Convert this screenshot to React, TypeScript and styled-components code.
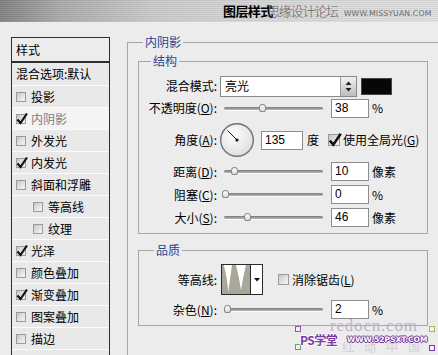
import React from "react";
import styled, { createGlobalStyle } from "styled-components";

const GlobalStyle = createGlobalStyle`
  html, body { margin: 0; padding: 0; }
  body {
    background: #ececec;
    font-family: "Noto Sans CJK SC", "Liberation Sans", sans-serif;
    font-size: 12px;
    color: #000;
  }
`;

const Window = styled.div`
  width: 438px;
  height: 355px;
  overflow: hidden;
  position: relative;
  background: #ececec;
`;

const TitleBar = styled.div`
  height: 22px;
  display: flex;
  align-items: center;
  position: relative;
  padding-left: 223px;
  box-sizing: border-box;
  background:
    repeating-linear-gradient(0deg, rgba(255,255,255,0.10) 0 1px, rgba(0,0,0,0.05) 1px 2px),
    linear-gradient(100deg, #7e7e7e 0%, #a9a9a9 14%, #c9c9c9 35%, #d6d6d6 60%, #dfdfdf 100%);
`;

const Title = styled.div`
  font-size: 13px;
  font-weight: 700;
  line-height: 16px;
  letter-spacing: -0.6px;
`;

const TitleMark = styled.div`
  position: absolute;
  left: 267px;
  top: 3px;
  display: flex;
  align-items: baseline;
  gap: 6px;
  white-space: nowrap;
  color: #5e5e5e;
`;

const TitleMarkCn = styled.span`
  font-size: 13px;
  line-height: 16px;
  letter-spacing: -1.2px;
  font-weight: 300;
`;

const TitleMarkEn = styled.span`
  font-family: "DejaVu Sans", sans-serif;
  font-size: 7.8px;
  letter-spacing: 0.1px;
  color: #6a6a6a;
`;

const Main = styled.div`
  display: flex;
  align-items: flex-start;
  padding-left: 11px;
`;

const StyleList = styled.div`
  width: 99px;
  box-sizing: border-box;
  margin-top: 15px;
  border: 1px solid #2e2e2e;
  padding-bottom: 40px;
  background: #e9e9e9;
  flex-shrink: 0;
`;

const ListHeader = styled.div`
  height: 23px;
  line-height: 23px;
  padding-left: 4px;
  border-bottom: 2px solid #2e2e2e;
  background: #ececec;
`;

const ListRow = styled.div<{ $indent?: boolean; $active?: boolean; $h?: number }>`
  height: ${(p) => p.$h ?? 22}px;
  box-sizing: border-box;
  display: flex;
  align-items: center;
  gap: 5px;
  padding-left: ${(p) => (p.$indent ? 21 : 4)}px;
  border-bottom: 1px solid #fbfbfb;
  background: ${(p) => (p.$active ? "#f4f4f4" : "#e9e9e9")};
  color: ${(p) => (p.$active ? "#7c7c7c" : "#000")};
  line-height: 14px;
`;

const Box = styled.span<{ $size?: number }>`
  position: relative;
  width: ${(p) => p.$size ?? 10}px;
  height: ${(p) => p.$size ?? 10}px;
  box-sizing: border-box;
  border: 1px solid #9a9a9a;
  background: linear-gradient(135deg, #c4c4c4 0%, #dedede 45%, #f6f6f6 100%);
  flex-shrink: 0;
  display: inline-block;
`;

const CheckSvg = styled.svg`
  position: absolute;
  left: -1px;
  top: -3px;
  overflow: visible;
`;

function Check({ checked, size }: { checked?: boolean; size?: number }) {
  const s = size ?? 10;
  return (
    <Box $size={s}>
      {checked && (
        <CheckSvg width={s + 2} height={s + 3} viewBox="0 0 12 13">
          <path d="M1.5 7.5 L4.5 11 L11 1.5" fill="none" stroke="#111" strokeWidth="2.2" />
        </CheckSvg>
      )}
    </Box>
  );
}

const OuterFrame = styled.div`
  position: relative;
  margin-left: 17px;
  margin-top: 20px;
  width: 320px;
  flex-shrink: 0;
  box-sizing: border-box;
  border: 1px solid #a6a6a6;
  padding: 18px 0 40px 10px;
`;

const Frame = styled.div<{ $mt?: number }>`
  position: relative;
  width: 290px;
  box-sizing: border-box;
  border: 1px solid #a6a6a6;
  margin-top: ${(p) => p.$mt ?? 0}px;
  padding-bottom: 6px;
`;

const FrameTitle = styled.div<{ $left: number }>`
  position: absolute;
  top: -8px;
  left: ${(p) => p.$left}px;
  padding: 0 2px;
  line-height: 14px;
  background: #ececec;
  color: #1f4690;
  font-size: 12px;
`;

const Row = styled.div<{ $h: number; $mt: number }>`
  display: flex;
  align-items: center;
  height: ${(p) => p.$h}px;
  margin-top: ${(p) => p.$mt}px;
  line-height: 14px;
`;

const Label = styled.div`
  width: 78px;
  flex-shrink: 0;
  text-align: right;
  white-space: nowrap;
`;

const U = styled.span`
  text-decoration: underline;
`;

const Select = styled.div`
  margin-left: 3px;
  width: 137px;
  height: 21px;
  box-sizing: border-box;
  border: 1px solid #8a8a8a;
  background: #fff;
  display: flex;
  align-items: center;
  padding-left: 4px;
`;

const SelectText = styled.span`
  flex: 1;
`;

const SelectButton = styled.div`
  width: 16px;
  height: 19px;
  box-sizing: border-box;
  border-left: 1px solid #9a9a9a;
  background: linear-gradient(#f2f2f2, #bdbdbd);
  display: flex;
  align-items: center;
  justify-content: center;
`;

const Swatch = styled.div`
  margin-left: 4px;
  width: 31px;
  height: 17px;
  box-sizing: border-box;
  border: 1px solid #444;
  background: #070707;
`;

const Track = styled.div<{ $ml?: number }>`
  position: relative;
  margin-left: ${(p) => p.$ml ?? 7}px;
  width: 99px;
  height: 3px;
  border-radius: 2px;
  background: linear-gradient(#7a7a7a, #b9b9b9);
  box-shadow: 0 1px 0 #fafafa;
  flex-shrink: 0;
`;

const Thumb = styled.div`
  position: absolute;
  top: -3px;
  width: 7px;
  height: 8px;
  box-sizing: border-box;
  margin-left: -3px;
  border: 1px solid #8a8a8a;
  border-radius: 50% 50% 35% 35%;
  background: linear-gradient(#ffffff, #dcdcdc);
`;

function Slider({ pos }: { pos: number }) {
  return (
    <Track>
      <Thumb style={{ left: pos }} />
    </Track>
  );
}

const NumBox = styled.div<{ $w?: number; $ml?: number }>`
  margin-left: ${(p) => p.$ml ?? 8}px;
  width: ${(p) => p.$w ?? 38}px;
  height: 19px;
  box-sizing: border-box;
  border: 1px solid #8e8e8e;
  background: #fff;
  padding-left: 3px;
  line-height: 17px;
  font-family: "Liberation Sans", sans-serif;
  font-size: 12px;
  flex-shrink: 0;
`;

const Unit = styled.span<{ $ml?: number }>`
  margin-left: ${(p) => p.$ml ?? 3}px;
  white-space: nowrap;
`;

const Dial = styled.svg`
  margin-left: 2px;
  flex-shrink: 0;
`;

const CheckLabel = styled.div<{ $ml: number }>`
  margin-left: ${(p) => p.$ml}px;
  display: flex;
  align-items: center;
  gap: 3px;
  white-space: nowrap;
`;

const ContourPicker = styled.div`
  margin-left: 4px;
  width: 42px;
  height: 31px;
  box-sizing: border-box;
  border: 1px solid #2a2a2a;
  display: flex;
  background: #fff;
`;

const ContourArrow = styled.div`
  flex: 1;
  border-left: 1px solid #2a2a2a;
  display: flex;
  align-items: center;
  justify-content: center;
`;

const MarkLayer = styled.div`
  position: absolute;
  left: 290px;
  top: 318px;
  width: 148px;
  height: 37px;
  pointer-events: none;
  white-space: nowrap;
`;

const Redocn = styled.div`
  position: absolute;
  left: 40px;
  top: -1px;
  font-family: "Liberation Serif", serif;
  font-size: 17px;
  line-height: 18px;
  color: #bdb3c6;
  letter-spacing: 0.8px;
`;

const RedocnCn = styled.div`
  position: absolute;
  left: 52px;
  top: 22px;
  font-size: 12px;
  line-height: 14px;
  color: #d3ccd9;
  letter-spacing: 10px;
`;

const PsMark = styled.div`
  position: absolute;
  left: 10px;
  top: 14px;
  font-size: 12px;
  line-height: 16px;
  font-weight: 700;
  color: #7a3aa6;
  text-shadow: 1px 0 #fff, -1px 0 #fff, 0 1px #fff, 0 -1px #fff;
  letter-spacing: -0.5px;
`;

const SiteMark = styled.div`
  position: absolute;
  left: 57px;
  top: 17px;
  font-family: "DejaVu Sans", sans-serif;
  font-size: 7.5px;
  line-height: 10px;
  font-weight: 700;
  color: #fff;
  letter-spacing: 0px;
  text-shadow: 1px 0 #6a2e96, -1px 0 #6a2e96, 0 1px #6a2e96, 0 -1px #6a2e96;
`;

const Corner = styled.div<{ $l: number; $t: number; $c: string }>`
  position: absolute;
  left: ${(p) => p.$l}px;
  top: ${(p) => p.$t}px;
  width: 4px;
  height: 4px;
  border: 1px solid ${(p) => p.$c};
  background: #f2f2f2;
`;

const listItems: { t: string; c?: boolean; indent?: boolean; active?: boolean }[] = [
  { t: "投影" },
  { t: "内阴影", c: true, active: true },
  { t: "外发光" },
  { t: "内发光", c: true },
  { t: "斜面和浮雕" },
  { t: "等高线", indent: true },
  { t: "纹理", indent: true },
  { t: "光泽", c: true },
  { t: "颜色叠加" },
  { t: "渐变叠加", c: true },
  { t: "图案叠加" },
  { t: "描边" },
];

export default function App() {
  return (
    <Window>
      <GlobalStyle />
      <TitleBar>
        <Title>图层样式</Title>
        <TitleMark>
          <TitleMarkCn>思缘设计论坛</TitleMarkCn>
          <TitleMarkEn>WWW.MISSYUAN.COM</TitleMarkEn>
        </TitleMark>
      </TitleBar>
      <Main>
        <StyleList>
          <ListHeader>样式</ListHeader>
          <ListRow $h={23}>混合选项:默认</ListRow>
          {listItems.map((it) => (
            <ListRow key={it.t} $indent={it.indent} $active={it.active}>
              <Check checked={it.c} />
              <span>{it.t}</span>
            </ListRow>
          ))}
        </StyleList>

        <OuterFrame>
          <FrameTitle $left={15}>内阴影</FrameTitle>

          <Frame>
            <FrameTitle $left={12}>结构</FrameTitle>
            <Row $h={22} $mt={13}>
              <Label>混合模式:</Label>
              <Select>
                <SelectText>亮光</SelectText>
                <SelectButton>
                  <svg width="7" height="11" viewBox="0 0 7 11">
                    <path d="M3.5 0.5 L6.5 4 L0.5 4 Z" fill="#222" />
                    <path d="M3.5 10.5 L6.5 7 L0.5 7 Z" fill="#222" />
                  </svg>
                </SelectButton>
              </Select>
              <Swatch />
            </Row>
            <Row $h={20} $mt={1}>
              <Label>
                不透明度(<U>O</U>):
              </Label>
              <Slider pos={38} />
              <NumBox>38</NumBox>
              <Unit>%</Unit>
            </Row>
            <Row $h={36} $mt={4}>
              <Label>
                角度(<U>A</U>):
              </Label>
              <Dial width="36" height="36" viewBox="0 0 36 36">
                <defs>
                  <radialGradient id="dialg" cx="40%" cy="35%" r="70%">
                    <stop offset="0%" stopColor="#ffffff" />
                    <stop offset="100%" stopColor="#dcdcdc" />
                  </radialGradient>
                </defs>
                <circle cx="18" cy="18" r="16.3" fill="url(#dialg)" stroke="#6b7180" strokeWidth="1.4" />
                <line x1="18" y1="18" x2="8.5" y2="8.5" stroke="#111" strokeWidth="1" />
                <circle cx="18" cy="18" r="1.6" fill="#111" />
              </Dial>
              <NumBox $w={42} $ml={6}>
                135
              </NumBox>
              <Unit $ml={4}>度</Unit>
              <CheckLabel $ml={9}>
                <Check checked size={12} />
                <span>
                  使用全局光(<U>G</U>)
                </span>
              </CheckLabel>
            </Row>
            <Row $h={19} $mt={4}>
              <Label>
                距离(<U>D</U>):
              </Label>
              <Slider pos={10} />
              <NumBox>10</NumBox>
              <Unit>像素</Unit>
            </Row>
            <Row $h={19} $mt={4}>
              <Label>
                阻塞(<U>C</U>):
              </Label>
              <Slider pos={1} />
              <NumBox>0</NumBox>
              <Unit>%</Unit>
            </Row>
            <Row $h={19} $mt={4}>
              <Label>
                大小(<U>S</U>):
              </Label>
              <Slider pos={23} />
              <NumBox>46</NumBox>
              <Unit>像素</Unit>
            </Row>
          </Frame>

          <Frame $mt={16}>
            <FrameTitle $left={15}>品质</FrameTitle>
            <Row $h={31} $mt={13}>
              <Label>等高线:</Label>
              <ContourPicker>
                <svg width="28" height="29" viewBox="0 0 28 29">
                  <rect width="28" height="29" fill="#a9a799" />
                  <path d="M1.8 0 L10 0 Q8 14 6.3 27 Q5 12 1.8 0 Z" fill="#ffffff" />
                  <path d="M14 0 L24 0 Q21 12 19 25 Q17 12 14 0 Z" fill="#ffffff" />
                </svg>
                <ContourArrow>
                  <svg width="6" height="4" viewBox="0 0 6 4">
                    <path d="M0 0 L6 0 L3 3.5 Z" fill="#111" />
                  </svg>
                </ContourArrow>
              </ContourPicker>
              <CheckLabel $ml={15}>
                <Check size={11} />
                <span>
                  消除锯齿(<U>L</U>)
                </span>
              </CheckLabel>
            </Row>
            <Row $h={19} $mt={5}>
              <Label>
                杂色(<U>N</U>):
              </Label>
              <Slider pos={3} />
              <NumBox>2</NumBox>
              <Unit>%</Unit>
            </Row>
          </Frame>
        </OuterFrame>
      </Main>

      <MarkLayer>
        <Redocn>redocn.com</Redocn>
        <RedocnCn>红动中国</RedocnCn>
        <Corner $l={5} $t={8} $c="#8a5aa8" />
        <Corner $l={5} $t={26} $c="#5aa85a" />
        <Corner $l={139} $t={8} $c="#b8b050" />
        <Corner $l={139} $t={27} $c="#7a3aa6" />
        <PsMark>PS学堂</PsMark>
        <SiteMark>WWW.52PSXT.COM</SiteMark>
      </MarkLayer>
    </Window>
  );
}
